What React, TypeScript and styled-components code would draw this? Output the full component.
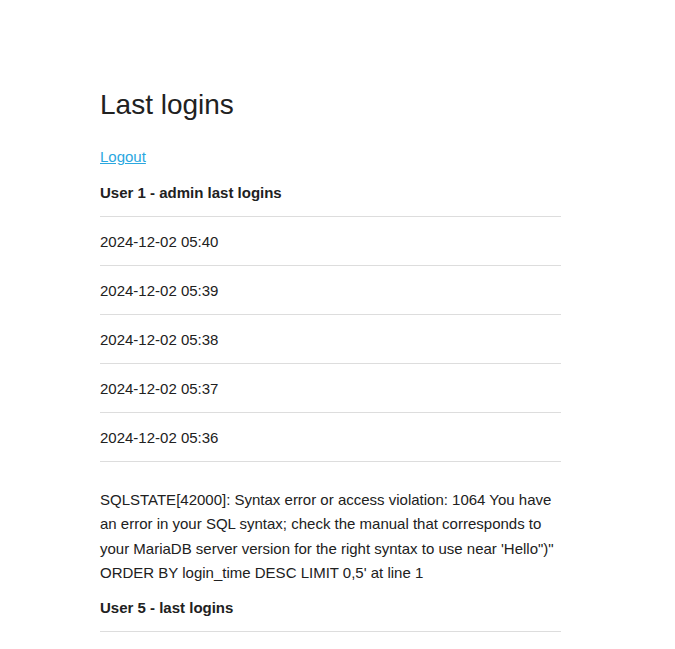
import React from 'react'
import styled, { createGlobalStyle } from 'styled-components'

const GlobalStyle = createGlobalStyle`
    body {
        margin: 0;
        background: #ffffff;
        color: #212121;
        font-family: 'Liberation Sans', Arial, sans-serif;
        font-size: 15px;
    }
`

const Page = styled.div`
    width: 461px;
    margin-left: 100px;
    padding-top: 87px;
`

const Title = styled.h1`
    font-size: 28px;
    font-weight: 400;
    line-height: 36px;
    margin: 0 0 22px 0;
`

const LogoutLink = styled.a`
    display: inline-block;
    color: #2aa7df;
    text-decoration: underline;
    line-height: 24px;
    margin-bottom: 11px;
`

const SectionTitle = styled.h2`
    font-size: 15px;
    font-weight: 700;
    line-height: 24px;
    margin: 0;
    padding: 1px 0 11px;
    border-bottom: 1px solid #dddddd;
`

const LoginList = styled.ul`
    list-style: none;
    margin: 0 0 26px 0;
    padding: 0;
`

const LoginRow = styled.li`
    line-height: 24px;
    padding: 13px 0 11px;
    border-bottom: 1px solid #dddddd;
`

const ErrorText = styled.p`
    line-height: 24.3px;
    margin: 0 0 10px 0;
`

const logins = [
    '2024-12-02 05:40',
    '2024-12-02 05:39',
    '2024-12-02 05:38',
    '2024-12-02 05:37',
    '2024-12-02 05:36',
]

export default function App() {
    return (
        <>
            <GlobalStyle />
            <Page>
                <Title>Last logins</Title>
                <LogoutLink href="#">Logout</LogoutLink>
                <SectionTitle>User 1 - admin last logins</SectionTitle>
                <LoginList>
                    {logins.map((time) => (
                        <LoginRow key={time}>{time}</LoginRow>
                    ))}
                </LoginList>
                <ErrorText>
                    SQLSTATE[42000]: Syntax error or access violation: 1064 You have an
                    error in your SQL syntax; check the manual that corresponds to your
                    MariaDB server version for the right syntax to use near
                    'Hello")" ORDER BY login_time DESC LIMIT 0,5' at line 1
                </ErrorText>
                <SectionTitle>User 5 - last logins</SectionTitle>
            </Page>
        </>
    )
}
